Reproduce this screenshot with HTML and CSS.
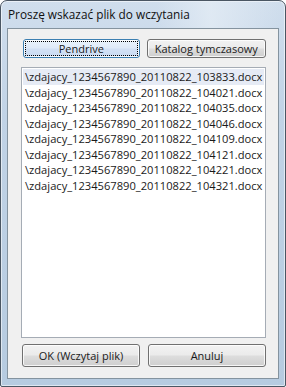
FILE: index.html
```html
<!DOCTYPE html>
<html lang="pl">
<head>
    <meta charset="UTF-8">
    <title>Proszę wskazać plik do wczytania</title>
    <link rel="stylesheet" href="styles.css">
</head>
<body>

    <div class="window">
        <div class="titlebar">Proszę wskazać plik do wczytania</div>

        <div class="client">
            <div class="top-row">
                <button class="btn btn-default" id="pendrive-btn">Pendrive</button>
                <button class="btn btn-wide" id="temp-btn">Katalog tymczasowy</button>
            </div>

            <ul class="file-list">
                <li class="selected">\zdajacy_1234567890_20110822_103833.docx</li>
                <li>\zdajacy_1234567890_20110822_104021.docx</li>
                <li>\zdajacy_1234567890_20110822_104035.docx</li>
                <li>\zdajacy_1234567890_20110822_104046.docx</li>
                <li>\zdajacy_1234567890_20110822_104109.docx</li>
                <li>\zdajacy_1234567890_20110822_104121.docx</li>
                <li>\zdajacy_1234567890_20110822_104221.docx</li>
                <li>\zdajacy_1234567890_20110822_104321.docx</li>
            </ul>

            <div class="bottom-row">
                <button class="btn btn-bottom" id="ok-btn">OK (Wczytaj plik)</button>
                <button class="btn btn-bottom" id="cancel-btn">Anuluj</button>
            </div>
        </div>
    </div>

</body>
</html>
```

FILE: styles.css
```css
body {
    margin: 0;
    padding: 0;
    background: #ffffff;
    font-family: 'Open Sans', 'Noto Sans', sans-serif;
}

.window {
    box-sizing: border-box;
    width: 286px;
    height: 387px;
    border: 1px solid #4a5663;
    border-radius: 7px 7px 2px 2px;
    padding: 0 6px 7px 6px;
    display: flex;
    flex-direction: column;
    background: linear-gradient(to bottom, #d0deed 0%, #c1d3e6 30%, #b6cbe0 100%);
    box-shadow: inset 0 0 0 1px rgba(255, 255, 255, 0.55);
}

.titlebar {
    height: 27px;
    line-height: 27px;
    font-size: 11.8px;
    color: #111;
    padding-left: 1px;
    background: linear-gradient(to right, rgba(255,255,255,0) 55%, rgba(230,238,246,0.7) 75%, rgba(255,255,255,0) 100%);
}

.client {
    flex: 1;
    background: #f0f0f0;
    border: 1px solid #84939f;
    padding: 10px 12px 0 13px;
    display: flex;
    flex-direction: column;
}

.top-row {
    display: flex;
    gap: 7px;
    padding-left: 2px;
}

.btn {
    box-sizing: border-box;
    font-family: inherit;
    font-size: 11px;
    color: #1a1a1a;
    border: 1px solid #707070;
    border-radius: 3px;
    background: linear-gradient(to bottom, #f2f2f2 0%, #ebebeb 48%, #dddddd 52%, #cfcfcf 100%);
    padding: 0;
    margin: 0;
    box-shadow: inset 0 0 0 1px rgba(255, 255, 255, 0.8);
}

.btn-default {
    width: 117px;
    height: 19px;
    border-color: #3c7fb1;
    background: linear-gradient(to bottom, #eaf3fc 0%, #dfeaf8 48%, #d2e1f5 52%, #c9daf2 100%);
    outline: 1px dotted #000;
    outline-offset: -3px;
}

.btn-wide {
    width: 120px;
    height: 19px;
}

.file-list {
    box-sizing: border-box;
    list-style: none;
    margin: 9px 0 0 0;
    padding: 1px;
    width: 245px;
    height: 271px;
    background: #ffffff;
    border: 1px solid #a5acb5;
    font-size: 11.15px;
}

.file-list li {
    height: 15.5px;
    line-height: 15.5px;
    padding-left: 2px;
    white-space: nowrap;
    color: #1a1a1a;
}

.file-list li.selected {
    background: #e6ebf5;
}

.bottom-row {
    display: flex;
    gap: 8px;
    margin-top: 6px;
    padding-left: 1px;
}

.btn-bottom {
    width: 118px;
    height: 23px;
}
```
